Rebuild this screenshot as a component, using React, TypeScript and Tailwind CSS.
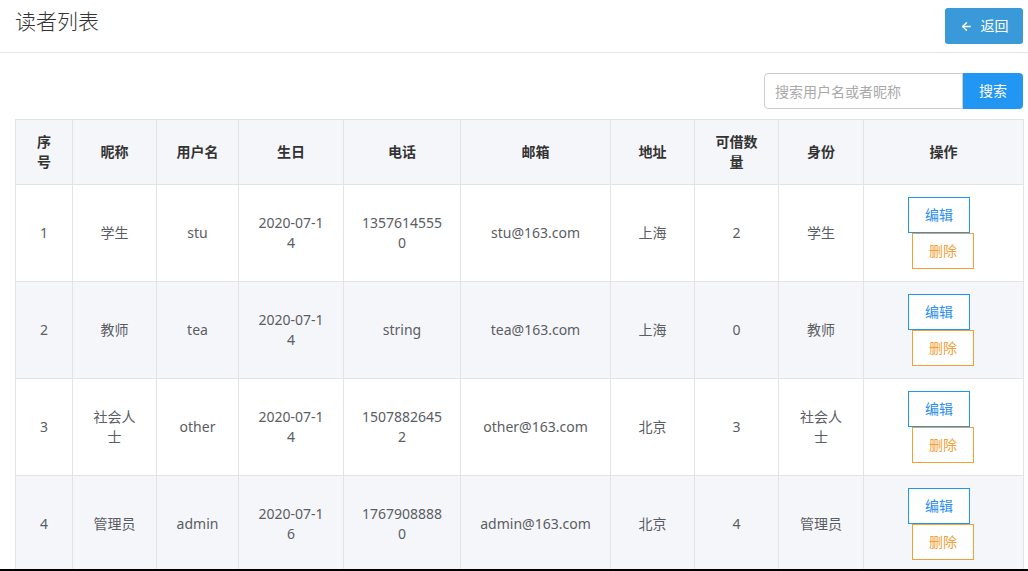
import { ArrowLeft } from 'lucide-react';

type Reader = {
    id: number;
    nickname: string;
    username: string;
    birthday: string;
    phone: string;
    email: string;
    address: string;
    quota: number;
    role: string;
};

const readers: Reader[] = [
    { id: 1, nickname: '学生', username: 'stu', birthday: '2020-07-14', phone: '13576145550', email: 'stu@163.com', address: '上海', quota: 2, role: '学生' },
    { id: 2, nickname: '教师', username: 'tea', birthday: '2020-07-14', phone: 'string', email: 'tea@163.com', address: '上海', quota: 0, role: '教师' },
    { id: 3, nickname: '社会人士', username: 'other', birthday: '2020-07-14', phone: '15078826452', email: 'other@163.com', address: '北京', quota: 3, role: '社会人士' },
    { id: 4, nickname: '管理员', username: 'admin', birthday: '2020-07-16', phone: '17679088880', email: 'admin@163.com', address: '北京', quota: 4, role: '管理员' },
];

const columns = [
    { title: '序号', width: 57 },
    { title: '昵称', width: 84 },
    { title: '用户名', width: 82 },
    { title: '生日', width: 105 },
    { title: '电话', width: 117 },
    { title: '邮箱', width: 150 },
    { title: '地址', width: 84 },
    { title: '可借数量', width: 84 },
    { title: '身份', width: 85 },
    { title: '操作', width: 160 },
];

export default function App() {
    return (
        <div
            className="h-[571px] overflow-hidden bg-white border-b-2 border-black"
            style={{ fontFamily: '"Noto Sans", "Noto Sans CJK SC", sans-serif' }}
        >
            <div className="h-[53px] flex items-center justify-between pl-[15px] pr-[5px] border-b border-[#e6e6e6]">
                <h1 className="text-[21px] font-light text-[#333] -mt-[8px]">读者列表</h1>
                <button className="h-9 w-[78px] flex items-center justify-center gap-[8px] rounded-[3px] bg-[#3a9ad9] text-white text-sm">
                    <ArrowLeft size={13} strokeWidth={2.5} />
                    <span>返回</span>
                </button>
            </div>

            <div className="pl-[15px] pr-[5px] pt-5">
                <div className="flex justify-end">
                    <div className="flex h-9">
                        <input
                            className="w-[199px] h-9 px-[10px] text-sm text-[#606266] border border-[#ccc] rounded-l-[4px] outline-none placeholder:text-[#a9a9a9]"
                            placeholder="搜索用户名或者昵称"
                        />
                        <button className="w-[60px] h-9 bg-[#2196f3] text-white text-sm rounded-r-[4px]">搜索</button>
                    </div>
                </div>

                <table className="mt-[10px] w-[1008px] table-fixed border-collapse text-sm leading-5">
                    <colgroup>
                        {columns.map((c) => (
                            <col key={c.title} style={{ width: c.width }} />
                        ))}
                    </colgroup>
                    <thead>
                        <tr className="h-[65px] bg-[#f5f6fa]">
                            {columns.map((c) => (
                                <th key={c.title} className="border border-[#e3e3e6] px-4 font-bold text-[#333] break-all">
                                    {c.title}
                                </th>
                            ))}
                        </tr>
                    </thead>
                    <tbody className="text-[#5a5d63]">
                        {readers.map((r, i) => (
                            <tr key={r.id} className={i % 2 === 1 ? 'h-[97px] bg-[#f5f6fa]' : 'h-[97px] bg-white'}>
                                <td className="border border-[#e3e3e6] px-4 text-center break-all">{r.id}</td>
                                <td className="border border-[#e3e3e6] px-4 text-center break-all">{r.nickname}</td>
                                <td className="border border-[#e3e3e6] px-4 text-center break-all">{r.username}</td>
                                <td className="border border-[#e3e3e6] px-4 text-center break-all">{r.birthday}</td>
                                <td className="border border-[#e3e3e6] px-4 text-center break-all">{r.phone}</td>
                                <td className="border border-[#e3e3e6] px-4 text-center break-all">{r.email}</td>
                                <td className="border border-[#e3e3e6] px-4 text-center break-all">{r.address}</td>
                                <td className="border border-[#e3e3e6] px-4 text-center break-all">{r.quota}</td>
                                <td className="border border-[#e3e3e6] px-4 text-center break-all">{r.role}</td>
                                <td className="border border-[#e3e3e6] py-3">
                                    <div className="flex flex-col items-start pl-[44px]">
                                        <button className="w-[62px] h-9 border border-[#2196f3] text-[#2a8ef0] bg-white text-sm">编辑</button>
                                        <button className="w-[62px] h-9 ml-1 border border-[#f0a035] text-[#f0a035] bg-white text-sm">删除</button>
                                    </div>
                                </td>
                            </tr>
                        ))}
                    </tbody>
                </table>
            </div>
        </div>
    );
}
